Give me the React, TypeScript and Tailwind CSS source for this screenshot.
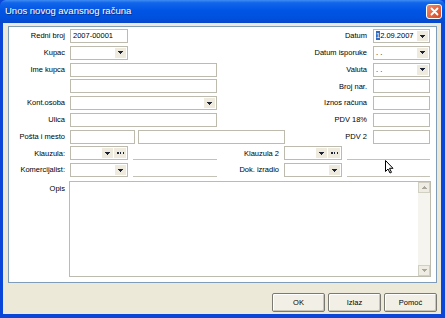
import React from "react";

const Arrow = ({ color = "#1b2236" }: { color?: string }) => (
  <svg width="5" height="3" viewBox="0 0 5 3" shapeRendering="crispEdges">
    <rect x="0" y="0" width="5" height="1" fill={color} />
    <rect x="1" y="1" width="3" height="1" fill={color} />
    <rect x="2" y="2" width="1" height="1" fill={color} />
  </svg>
);

const Dots = () => (
  <svg width="7" height="2" viewBox="0 0 7 2" shapeRendering="crispEdges">
    <rect x="0" y="0" width="1.5" height="1.5" fill="#1b2236" />
    <rect x="2.75" y="0" width="1.5" height="1.5" fill="#1b2236" />
    <rect x="5.5" y="0" width="1.5" height="1.5" fill="#1b2236" />
  </svg>
);

const Input = ({ className = "", children }: { className?: string; children?: React.ReactNode }) => (
  <div className={`h-[14px] shrink-0 border border-[#bdbaae] bg-white px-[2px] flex items-center ${className}`}>
    {children}
  </div>
);

const Combo = ({ className = "", value, dots }: { className?: string; value?: React.ReactNode; dots?: boolean }) => (
  <div className={`h-[14px] shrink-0 border border-[#bdbaae] bg-white flex ${className}`}>
    <div className="flex-1 px-[2px] flex items-center overflow-hidden whitespace-nowrap">{value}</div>
    <div className="w-[11px] my-[1px] mr-[1px] bg-[#eeeadd] flex items-center justify-center">
      <Arrow />
    </div>
    {dots && (
      <div className="w-[12px] my-[1px] mr-[1px] bg-[#eeeadd] flex items-center justify-center">
        <Dots />
      </div>
    )}
  </div>
);

const Line = ({ className = "" }: { className?: string }) => (
  <div className={`h-[14px] shrink-0 border-b border-[#c4c1b6] ${className}`} />
);

const Row = ({
  label,
  left,
  rightLabel,
  right,
}: {
  label: string;
  left: React.ReactNode;
  rightLabel?: string;
  right?: React.ReactNode;
}) => (
  <div className="flex h-[14px] items-center">
    <div className="w-[56px] shrink-0 text-right">{label}</div>
    <div className="ml-[5px] flex gap-[3px]">{left}</div>
    <div className="flex-1 text-right pr-[6px]">{rightLabel}</div>
    <div className="w-[57px] mr-[6px] shrink-0">{right}</div>
  </div>
);

const Btn = ({ children }: { children: React.ReactNode }) => (
  <button className="w-[53px] h-[19px] border border-[#7a7a72] rounded-[2px] bg-[#f2f0e6] shadow-[inset_1px_1px_#ffffff,inset_-1px_-1px_#c9c6b8] text-[7.5px] text-black">
    {children}
  </button>
);

export default function App() {
  return (
    <div className="relative w-[445px] h-[318px] bg-[#0a46d8] flex flex-col px-[3px] pb-[4px] pr-[4px] font-['Liberation_Sans',Arial,sans-serif] text-[7.5px] text-black overflow-hidden">
      {/* title bar */}
      <div className="-mx-[3px] -mr-[4px] h-[23px] shrink-0 flex items-center justify-between pl-[5px] pr-[3px] bg-[linear-gradient(to_bottom,#3f8cf3_0%,#1266ea_12%,#0055e5_45%,#0050dd_80%,#0b46c8_100%)] rounded-t-[6px]">
        <span className="text-white text-[9.5px] [text-shadow:1px_1px_#0b2d8a]">Unos novog avansnog računa</span>
        <div className="w-[16px] h-[15px] rounded-[3px] border border-white bg-[linear-gradient(135deg,#ee8a6a,#d9471f)] flex items-center justify-center">
          <svg width="9" height="9" viewBox="0 0 9 9">
            <path d="M1.5 1.5l6 6M7.5 1.5l-6 6" stroke="white" strokeWidth="1.8" strokeLinecap="round" />
          </svg>
        </div>
      </div>

      {/* client */}
      <div className="flex-1 bg-[#ece9d8] flex flex-col pl-[5px] pr-[4px] pt-[3px]">
        <div className="border border-[#7f9db9] bg-white flex flex-col pt-[2px] pb-[5px]">
          <div className="flex flex-col gap-[2.75px]">
            <Row
              label="Redni broj"
              left={<Input className="w-[58px]">2007-00001</Input>}
              rightLabel="Datum"
              right={
                <Combo
                  value={
                    <span>
                      <span className="bg-[#316ac5] text-white">1</span>2.09.2007
                    </span>
                  }
                />
              }
            />
            <Row label="Kupac" left={<Combo className="w-[58px]" />} rightLabel="Datum isporuke" right={<Combo value=". ." />} />
            <Row label="Ime kupca" left={<Input className="w-[147px]" />} rightLabel="Valuta" right={<Combo value=". ." />} />
            <Row label="" left={<Input className="w-[147px]" />} rightLabel="Broj nar." right={<Input />} />
            <Row label="Kont.osoba" left={<Combo className="w-[147px]" />} rightLabel="Iznos računa" right={<Input />} />
            <Row label="Ulica" left={<Input className="w-[147px]" />} rightLabel="PDV 18%" right={<Input />} />
            <Row
              label="Pošta i mesto"
              left={
                <>
                  <Input className="w-[65px]" />
                  <Input className="w-[147px]" />
                </>
              }
              rightLabel="PDV 2"
              right={<Input />}
            />
            <div className="flex h-[14px] items-center">
              <div className="w-[56px] shrink-0 text-right">Klauzula:</div>
              <Combo className="ml-[5px] w-[58px]" dots />
              <Line className="ml-[5px] w-[84px]" />
              <div className="w-[62px] shrink-0 text-right">Klauzula 2</div>
              <Combo className="ml-[5px] w-[58px]" dots />
              <Line className="ml-[5px] w-[83px]" />
            </div>
            <div className="flex h-[14px] items-center">
              <div className="w-[56px] shrink-0 text-right">Komercijalist:</div>
              <Combo className="ml-[5px] w-[58px]" />
              <Line className="ml-[5px] w-[84px]" />
              <div className="w-[62px] shrink-0 text-right">Dok. izradio</div>
              <Combo className="ml-[5px] w-[58px]" />
              <Line className="ml-[5px] w-[83px]" />
            </div>
          </div>

          <div className="flex mt-[4px]">
            <div className="w-[56px] shrink-0 text-right pt-[2px]">Opis</div>
            <div className="ml-[4px] w-[362px] h-[96px] border border-[#bdbaae] bg-white flex justify-end">
              <div className="w-[12px] bg-[#f5f4ef] flex flex-col justify-between">
                <div className="h-[11px] border border-[#d2cfc3] bg-[#efede3] flex items-center justify-center">
                  <div className="rotate-180 flex">
                    <Arrow color="#a9a79c" />
                  </div>
                </div>
                <div className="h-[11px] border border-[#d2cfc3] bg-[#efede3] flex items-center justify-center">
                  <Arrow color="#a9a79c" />
                </div>
              </div>
            </div>
          </div>
        </div>

        <div className="mt-[10px] flex justify-end gap-[3px]">
          <Btn>OK</Btn>
          <Btn>Izlaz</Btn>
          <Btn>Pomoć</Btn>
        </div>
      </div>

      {/* mouse pointer */}
      <svg className="absolute left-[385px] top-[160px]" width="9" height="14" viewBox="0 0 9 14">
        <path d="M0.5 0.5v11l2.5-2.5 2 4 1.5-0.7-2-4h3.5z" fill="white" stroke="black" strokeWidth="1" strokeLinejoin="round" />
      </svg>
    </div>
  );
}
